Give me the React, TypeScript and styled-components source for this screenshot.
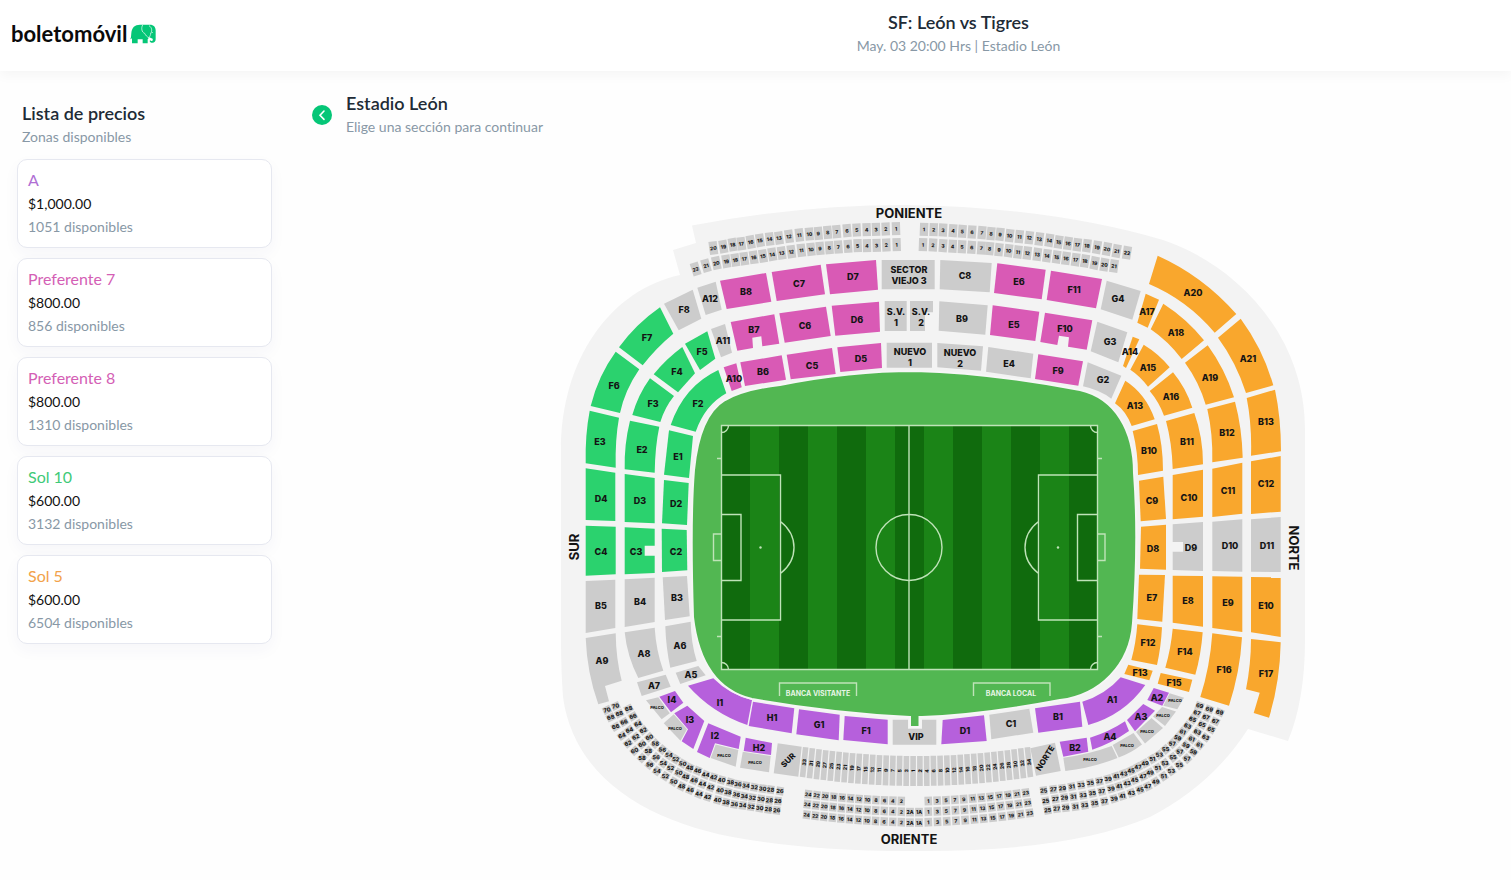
import React from "react";
import styled, { createGlobalStyle } from "styled-components";

const GlobalStyle = createGlobalStyle`
  * { box-sizing: border-box; }
  body {
    margin: 0;
    background: #fefefe;
    color: #212b36;
    font-family: Lato, "Liberation Sans", sans-serif;
    font-variant-ligatures: none;
  }
`;

const Header = styled.header`
  display: grid;
  grid-template-columns: 406px 1fr;
  height: 71px;
  background: #fff;
  box-shadow: 0 4px 12px rgba(0, 0, 0, 0.04);
`;

const Logo = styled.a`
  display: flex;
  align-items: center;
  gap: 3px;
  height: 68px;
  padding-left: 11px;
  color: #0a0a0a;
  font-size: 22px;
  line-height: 28px;
  font-weight: 700;
  text-decoration: none;
`;

const EventInfo = styled.div`
  padding-top: 10px;
  text-align: center;
`;

const Title = styled.h2`
  margin: 0;
  font-size: 18px;
  line-height: 24px;
  font-weight: 600;
  color: #212b36;
`;

const Subtitle = styled.p`
  margin: 0;
  font-size: 14px;
  line-height: 24px;
  color: #8898a6;
`;

const Layout = styled.div`
  display: grid;
  grid-template-columns: 272px 1fr;
  column-gap: 40px;
`;

const Sidebar = styled.aside`
  padding: 30px 0 0 17px;
`;

const SidebarHeading = styled.div`
  padding-left: 5px;
`;

const PriceList = styled.ul`
  display: flex;
  flex-direction: column;
  gap: 10px;
  margin: 10px 0 0;
  padding: 0;
  list-style: none;
`;

const PriceCard = styled.button`
  display: flex;
  flex-direction: column;
  width: 100%;
  padding: 9px 10px 11px;
  border: 1px solid #e6e8f0;
  border-radius: 10px;
  background: #fff;
  box-shadow: 0 6px 16px rgba(60, 60, 120, 0.04);
  font-family: inherit;
  text-align: left;
  cursor: pointer;
`;

const ZoneName = styled.span<{ $color: string }>`
  font-size: 16px;
  line-height: 22px;
  color: ${(p) => p.$color};
`;

const Price = styled.span`
  font-size: 14px;
  line-height: 26px;
  color: #111;
`;

const Available = styled.span`
  font-size: 14px;
  line-height: 19px;
  color: #8898a6;
`;

const Main = styled.main`
  padding-top: 20px;
`;

const VenueBar = styled.div`
  display: flex;
  align-items: center;
  gap: 14px;
`;

const BackButton = styled.button`
  display: flex;
  align-items: center;
  justify-content: center;
  width: 20px;
  height: 20px;
  padding: 0;
  border: 0;
  border-radius: 50%;
  background: #05c677;
  cursor: pointer;
`;

const MapArea = styled.div`
  display: flex;
  justify-content: center;
  margin: 56px 0 0 43px;
`;

const MapSvg = styled.svg`
  display: block;
  width: 100%;
  max-width: 770px;
  height: auto;
  font-family: Inter, "Liberation Sans", sans-serif;
`;

const Section = styled.path<{ $fill: string }>`
  fill: ${(p) => p.$fill};
`;

const SectionLabel = styled.text<{ $size?: number }>`
  font-size: ${(p) => p.$size ?? 9}px;
  font-weight: 800;
  fill: #141414;
  text-anchor: middle;
  dominant-baseline: central;
`;

const SideLabel = styled(SectionLabel)`
  font-size: 13px;
  font-weight: 700;
`;

const BenchLabel = styled(SectionLabel)`
  font-size: 7px;
  font-weight: 700;
  fill: #e6f5e4;
`;

const Line = styled.path`
  fill: none;
  stroke: #bfe3b8;
  stroke-width: 1.4;
`;

const PINK = "#d95ab5";
const GREEN = "#2bd26e";
const ORANGE = "#f9a72d";
const PURPLE = "#b660dc";
const GRAY = "#cccccc";

type Zone = [name: string, x: number, y: number, d: string];

const zones: Record<string, Zone[]> = {
  [PINK]: [
    ["B8", 746, 291, "M720 280.7 766 273 771.3 301.7 726.7 309Z"],
    ["C7", 799, 283, "M771.7 272 820.7 264.7 825 294.3 776.7 301Z"],
    ["D7", 853, 276, "M826 264.3 876 260 878 289.7 830 294.3Z"],
    ["B7", 754, 329, "M730.7 322 774.3 314.3 779.3 343.7 762.3 346.3 761.3 336.3 752.3 337.7 753 348 737.3 350.7Z"],
    ["C6", 805, 325, "M779.3 313.3 826 306.7 830.7 336 784.7 342.7Z"],
    ["D6", 857, 319, "M831.7 305.7 879 301.7 880 331.7 835.3 335.7Z"],
    ["A10", 734, 378, "M723.7 367.3 736.3 363.3 741.7 387.3 731.7 391Z"],
    ["B6", 763, 371, "M740.3 362.3 781.7 355.3 786 379.7 745 386Z"],
    ["C5", 812, 365, "M786.7 354.7 832 348 835.7 374 790.7 379.3Z"],
    ["D5", 861, 358, "M837.3 347.3 881 343 882 368 840.3 372Z"],
    ["E6", 1019, 281, "M997.3 263.3 1045.7 269.7 1041.7 299.3 994 293Z"],
    ["F11", 1074, 289, "M1051 270.7 1102 279 1096 308.3 1046.7 300Z"],
    ["E5", 1014, 324, "M992.7 305.3 1039.3 311.7 1035.3 341 990 335Z"],
    ["F10", 1065, 328, "M1045 312.7 1092.3 320.3 1086.7 349.7 1068 346.7 1069 337.3 1059 335.7 1057.3 345 1040.3 342Z"],
    ["F9", 1058, 370, "M1038.3 354.3 1083 361.3 1078.3 385.7 1035 379Z"],
  ],
  [GREEN]: [
    ["F7", 647, 337, "M660 307.3 673.3 333.7Q656 348 642.7 365.3L619 347.3Q636 324 660 307.3Z"],
    ["F6", 614, 385, "M615.7 351.7 639.3 369.3Q625 390 620 413L590.7 406Q598 376 615.7 351.7Z"],
    ["F5", 702, 351, "M685 343.7 707.3 331.3 715.3 358.7 700 370Z"],
    ["F4", 677, 371, "M682.3 347 695 373.3 678 392.3 653.7 374.3Q666 359 682.3 347Z"],
    ["F3", 653, 403, "M650 378.3 674 396Q665 407 660.3 422L632.3 415Q638 395 650 378.3Z"],
    ["F2", 698, 403, "M718.3 370 726.3 393.3Q705 405 695.7 431.7L670.7 425Q684 386 718.3 370Z"],
    ["E3", 600, 441, "M589.7 410.7 619 417.7Q615 440 615.7 467.7L585.7 463.3Q585 435 589.7 410.7Z"],
    ["E2", 642, 449, "M630 420.7 659.3 426.7Q655 447 654.7 472.7L624.7 469.3Q624 445 630 420.7Z"],
    ["E1", 678, 456, "M669 430.3 693 436 689 478 664 474.7Z"],
    ["D4", 601, 498, "M585.7 468.3 615.3 472.7 615.3 521 585.7 520Z"],
    ["D3", 640, 500, "M624.7 474 654.7 478 654.7 523.3 624.7 522Z"],
    ["D2", 676, 503, "M664 480 688.7 483 687 525 662 523.3Z"],
    ["C4", 601, 551, "M585.7 525.7 615.7 526.7 615.7 574.3 585.7 575.7Z"],
    ["C3", 636, 551, "M624.7 527.3 654.7 528.7V545.7H644.7V555.7H654.7V573L624.7 574.3Z"],
    ["C2", 676, 551, "M661.7 528.7 686.7 530 687.3 570.3 662 572Z"],
  ],
  [ORANGE]: [
    ["A20", 1193, 292, "M1157.7 255.7Q1203 276 1236.3 314L1214.7 332.7Q1187 300 1149 284Z"],
    ["A21", 1248, 358, "M1240.7 318.7Q1263 349 1273.3 385.3L1246 393Q1236 362 1218 337.7Z"],
    ["A17", 1147, 311, "M1145.7 293.7 1159 299.7 1147.7 327.7 1137.3 322.7Z"],
    ["A18", 1176, 332, "M1163.3 303.7Q1187 319 1204 340.3L1181.7 359Q1168 341 1150.7 329.3Z"],
    ["A14", 1130, 351, "M1132.7 336.7 1139.3 339.3 1126 368 1123 366Z"],
    ["A15", 1148, 367, "M1143.7 344.7Q1159 354 1169.7 367.3L1148 386.7Q1140 376 1130.3 369.7Z"],
    ["A19", 1210, 377, "M1207.7 345.3Q1225 369 1234 397.3L1205.7 404.7Q1199 382 1185 362.7Z"],
    ["A16", 1171, 396, "M1173 372.3Q1186 388 1192.3 407.7L1164 415.7Q1159 402 1149.7 391Z"],
    ["A13", 1135, 405, "M1125.3 380.7Q1146 394 1154.7 419.3L1131.7 426Q1126 411 1115 403.3Z"],
    ["B13", 1266, 421, "M1246.7 398 1275 389.7Q1281 418 1281 451.3L1251 455.7Q1252 425 1246.7 398Z"],
    ["B12", 1227, 432, "M1207.3 409 1235 401.7Q1242 428 1242.7 457.7L1212.3 462.3Q1213 434 1207.3 409Z"],
    ["B11", 1187, 441, "M1166 421 1194.3 413Q1203 437 1203 464.3L1172.7 469Q1172 443 1166 421Z"],
    ["B10", 1149, 450, "M1132.7 431 1157 424Q1163 445 1163 470.7L1138 475Q1138 452 1132.7 431Z"],
    ["C9", 1152, 500, "M1139 480.7 1163.3 476.7 1166 519 1140.7 521.3Z"],
    ["C10", 1189, 497, "M1172.7 475 1203 469.7 1203 516.7 1172.7 519.3Z"],
    ["C11", 1228, 490, "M1212.3 468.7 1242.3 462.7 1242.3 513.7 1212.3 517Z"],
    ["C12", 1266, 483, "M1251 461.3 1280.7 456 1280.7 511.7 1251 514Z"],
    ["D8", 1153, 548, "M1141 526.7 1166 524.7 1166 569.7 1140 568.7Z"],
    ["E7", 1152, 597, "M1139 574.7 1165 575 1162.3 621.7 1137.3 619Z"],
    ["E8", 1188, 600, "M1172.7 575.7 1203 576 1203 626.7 1172.7 622.7Z"],
    ["E9", 1228, 602, "M1212.3 576.3 1242.3 576.7 1242.3 632 1212.3 628Z"],
    ["E10", 1266, 605, "M1251 577 1280.7 577.3 1280.7 637 1251 632.3Z"],
    ["F12", 1148, 642, "M1137.3 624.3 1162 627.3Q1161 647 1157 665L1131.3 660Q1136 643 1137.3 624.3Z"],
    ["F14", 1185, 651, "M1172.7 628.7 1202.7 632.3Q1201 655 1195.3 674.7L1165.3 667.7Q1171 648 1172.7 628.7Z"],
    ["F16", 1224, 669, "M1212.3 633.3 1242 637.3Q1240 672 1229 705.7L1200.3 697Q1210 667 1212.3 633.3Z"],
    ["F17", 1266, 673, "M1251 639 1280.7 642.3Q1280 682 1269 717.7L1253.7 713 1259.7 692.7 1246 689.3Q1251 664 1251 639Z"],
    ["F13", 1140, 672, "M1128.3 664.7 1152.7 670.7 1149.3 680.3 1124.3 674Z"],
    ["F15", 1174, 682, "M1160.7 673 1192.3 679.7 1189 692 1157.7 683.7Z"],
  ],
  [PURPLE]: [
    ["A1", 1112, 699, "M1120.7 677.3 1145.3 685Q1124 715 1088.3 725L1082.3 701.7Q1105 695 1120.7 677.3Z"],
    ["A2", 1157, 697, "M1153.7 688 1169 692.7 1162.3 705.7 1147.3 700Z"],
    ["A3", 1141, 716, "M1143.3 704 1155 710.7 1135 731.3 1127 720Z"],
    ["A4", 1110, 736, "M1125 721.3 1129 731Q1112 743 1092.3 749.7L1090 737.7Q1109 732 1125 721.3Z"],
    ["B2", 1075, 747, "M1059.7 741.7 1086.7 737.7 1088.3 751.7 1063.3 756.7Z"],
    ["B1", 1058, 716, "M1035 708.3 1080 701.7 1082.3 726.7 1038.3 732.7Z"],
    ["D1", 965, 730, "M942.7 720 984 715.3 986.7 741 941.3 744.3Z"],
    ["F1", 866, 730, "M844.7 716 887.7 719.7 887.7 744.3 843.3 740Z"],
    ["G1", 819, 724, "M799 709.3 839.7 714.7 838.7 740.3 796.3 734.3Z"],
    ["H1", 772, 717, "M753 701.7 794.3 708.3 791.7 733.3 748.7 726Z"],
    ["I1", 720, 702, "M688 685.7 713.3 678.3Q730 695 752 700L747.3 725Q712 713 688 685.7Z"],
    ["I4", 672, 699, "M659.3 696.7 675 691 683.3 702.7 671 712.3Z"],
    ["I3", 690, 719, "M674.3 713.3 687.3 705.7 704.3 721 693.3 749 681.7 741.3 688 729.3Z"],
    ["I2", 715, 735, "M708.3 723.3 740.7 736.7 738.7 749 715 743.3 709.7 758 697 752Z"],
    ["H2", 759, 747, "M745.7 737.7 772 743 771 755 743.7 751Z"],
  ],
  [GRAY]: [
    ["A12", 710, 298, "M697.3 287.7 715.7 281.7 721.7 309.7 705.7 315Z"],
    ["F8", 684, 309, "M664 303.7 692.7 289.7 701.3 318.7 678.7 330.3Z"],
    ["A11", 723, 340, "M711 329 725 324 732 352.7 721 357.3Z"],
    ["C8", 965, 275, "M940.3 260 991.7 263 989.7 292.3 939.7 289.3Z"],
    ["G4", 1118, 298, "M1106.7 280.7 1140.7 291 1132.3 319.7 1100.7 309.3Z"],
    ["B9", 962, 318, "M939.3 301.3 987.7 305.3 985.3 334.7 938.7 330.7Z"],
    ["G3", 1110, 341, "M1097.3 321.7 1127.3 332.3 1118.3 362.3 1090.7 351.3Z"],
    ["E4", 1009, 363, "M988.3 347 1033.3 353.7 1030.7 378.3 986 371.7Z"],
    ["G2", 1103, 379, "M1087.7 362.3 1121.3 375.7 1111.3 398.7Q1100 390 1083 386.3Z"],
    ["D9", 1191, 547, "M1172.7 524.3 1203 522V571L1172.7 570V551.7H1183V542H1172.7Z"],
    ["D10", 1230, 545, "M1212.3 521.7 1242.3 519.3 1242.3 571.7 1212.3 571Z"],
    ["D11", 1267, 545, "M1251 519.3 1280.7 517 1280.7 572 1251 571.7Z"],
    ["B5", 601, 605, "M585.7 581 615.3 579.7 615.3 628 585.7 633Z"],
    ["B4", 640, 601, "M624.7 579.3 654.7 577.7 654.7 622 624.7 627Z"],
    ["B3", 677, 597, "M662.7 577.3 687 576 689.7 616.3 665 620Z"],
    ["A9", 602, 660, "M585.7 638 615.7 633.3Q616 659 621.7 680.7L605 686 609 701.3 598.3 704.3Q587 673 585.7 638Z"],
    ["A8", 644, 653, "M624.7 632.3 654.7 627.7Q656 650 663.3 670.7L638.3 678Q627 656 624.7 632.3Z"],
    ["A6", 680, 645, "M665.3 626.3 690.7 621.7Q691 643 696.7 661L670.3 667.7Q666 648 665.3 626.3Z"],
    ["A7", 654, 685, "M637 682.3 665.7 674.7 670.7 686.7 641.7 696Z"],
    ["A5", 691, 674, "M675.7 672.7 698.3 666 705.7 675.3 680.3 684Z"],
    ["C1", 1011, 723, "M989.3 714.7 1029.3 708.7 1033.3 732.7 991.3 739.3Z"],
    ["VIP", 916, 736, "M892.7 719.7H908V728.7H922V719.7H936.3V744.7H892.7Z"],
  ],
};

const boxes: Zone[] = [
  ["PALCO", 657, 707, "M646 700.3 658.3 697.2 669.8 713.2 661.7 719.3Z"],
  ["PALCO", 675, 728, "M673.8 714.3 687 729.3 680.5 740.7 663.7 723.3Z"],
  ["PALCO", 724, 755, "M715.7 744.4 738.3 750 735.7 766.7 710.7 758Z"],
  ["PALCO", 755, 762, "M742.8 751.7 770.7 756 769 772.3 740 767.7Z"],
  ["PALCO", 1175, 700, "M1169.7 693.3 1184 697.7 1177.3 709.3 1163.3 705.7Z"],
  ["PALCO", 1163, 715, "M1162 707 1176 711.5 1165 726 1153 716.5Z"],
  ["PALCO", 1147, 731, "M1151.5 718 1163 728 1145 743.5 1136 732Z"],
  ["PALCO", 1127, 745, "M1112.7 745 1133.5 733 1142 744.5Q1131 753 1118.7 757.5Z"],
  ["PALCO", 1090, 759, "M1063.3 757.8Q1090 754 1111.7 746L1117.5 758Q1092 768 1065.3 771Z"],
];

const twoLine: [string, string, number, number, string][] = [
  ["SECTOR", "VIEJO 3", 909, 274, "M881.7 260H934.7V289.3H881.7Z"],
  ["S.V.", "1", 896, 316, "M884.7 301H906.7V331H884.7Z"],
  ["S.V.", "2", 921, 316, "M910 301H933V312.3H925V331H910Z"],
  ["NUEVO", "1", 910, 356, "M886.7 342.7H932V367.7H886.7Z"],
  ["NUEVO", "2", 960, 357, "M937.3 343 983 346.3 981 370.7 937.3 367.3Z"],
];

// Seat rows list cell centres as x,y pairs on a grid three times finer than the map.
type SeatRow = {
  x: number;
  y: number;
  w: number;
  h: number;
  first: number;
  step: number;
  size: number;
  upright?: boolean;
  pts: number[];
};

const top = { w: 25, h: 39, size: 15 };
const corner = { w: 22, h: 25, size: 17, upright: true };

const seatRows: SeatRow[] = [
  { ...top, x: 680, y: 195, first: 20, step: -1, pts: [100,159,130,155,158,149,184,146,212,141,240,136,269,132,297,129,327,124,358,120,388,117,415,115,443,112,470,110,501,107,530,105,560,104,588,103,617,102,648,101] },
  { ...top, x: 680, y: 195, first: 22, step: -1, pts: [47,222,78,212,109,204,139,199,166,195,193,191,221,187,249,183,277,178,305,174,334,170,364,166,393,163,420,160,448,158,475,156,504,154,533,152,561,152,590,151,619,150,650,149] },
  { ...top, x: 900, y: 195, first: 1, step: 1, pts: [72,103,101,104,129,105,159,107,187,109,216,111,246,113,273,116,300,118,329,122,358,125,388,128,418,132,448,136,476,141,504,145,532,149,561,152,591,157,621,162,650,168,681,173] },
  { ...top, x: 900, y: 195, first: 1, step: 1, pts: [69,149,99,150,129,152,158,154,186,155,215,157,244,159,269,161,297,164,326,167,354,171,382,174,412,178,441,182,470,186,498,190,527,194,555,198,584,204,613,209,642,213] },
  { ...corner, x: 560, y: 640, first: 70, step: -2, pts: [141,210,152,232,167,260,186,287,204,310,224,332,246,354,269,374,291,393,316,409,341,425,365,439,390,450,417,462,443,471,473,480,498,487,523,493,548,496,573,500,599,504,625,508,650,511] },
  { ...corner, x: 560, y: 640, first: 70, step: -2, pts: [167,198,178,221,192,246,208,270,227,291,246,313,265,333,288,352,310,370,332,384,356,398,377,410,402,421,427,432,452,442,480,451,504,457,529,464,553,469,577,473,603,477,628,481,654,483] },
  { ...corner, x: 560, y: 640, first: 68, step: -2, pts: [206,206,219,229,234,252,250,271,268,292,286,311,307,329,327,345,347,358,368,371,389,383,413,392,437,404,461,412,485,420,511,427,534,433,558,437,583,442,608,446,632,449,660,453] },
  { ...corner, x: 1000, y: 650, first: 25, step: 2, pts: [131,422,160,418,187,415,215,410,243,405,271,399,298,394,324,387,348,379,371,371,393,362,414,351,435,340,457,327,478,314,497,298,517,281,533,264,548,246,563,228,578,208,591,189,599,167] },
  { ...corner, x: 1000, y: 650, first: 25, step: 2, pts: [137,453,166,447,193,443,220,440,249,436,277,430,305,424,333,416,357,409,381,400,404,390,429,379,450,368,473,354,495,340,519,322,539,305,558,286,575,267,592,246,606,224,618,202,628,178] },
  { ...corner, x: 1000, y: 650, first: 25, step: 2, pts: [143,481,170,476,197,473,226,470,254,466,284,460,313,454,342,446,367,438,394,429,420,419,443,409,467,395,491,379,514,363,538,345,561,326,580,306,598,285,617,262,633,238,646,214,659,187] },
];

type CellProps = {
  x: number;
  y: number;
  w: number;
  h: number;
  angle: number;
  size: number;
  label: string;
  turn?: number;
};

function Cell({ x, y, w, h, angle, size, label, turn }: CellProps) {
  return (
    <g transform={`translate(${x} ${y}) rotate(${angle})`}>
      <rect x={-w / 2} y={-h / 2} width={w} height={h} fill={GRAY} />
      <SectionLabel $size={size} transform={turn ? `rotate(${turn})` : undefined}>
        {label}
      </SectionLabel>
    </g>
  );
}

function Seats({ x, y, w, h, first, step, size, upright, pts }: SeatRow) {
  const count = pts.length / 2;
  return (
    <g transform={`translate(${x} ${y}) scale(${1 / 3})`}>
      {Array.from({ length: count }, (_, i) => {
        const a = Math.max(i - 1, 0) * 2;
        const b = Math.min(i + 1, count - 1) * 2;
        const angle = (Math.atan2(pts[b + 1] - pts[a + 1], pts[b] - pts[a]) * 180) / Math.PI;
        // Steep cells carry their number level with the page, leaning slightly into the bend.
        const lean = Math.abs(angle) > 45 ? angle - Math.sign(angle) * 90 : angle * (1 - Math.abs(angle) / 45);
        return (
          <Cell
            key={i}
            x={pts[i * 2]}
            y={pts[i * 2 + 1]}
            w={w}
            h={h}
            angle={angle}
            turn={upright ? lean / 2 - angle : 0}
            size={size}
            label={String(first + step * i)}
          />
        );
      })}
    </g>
  );
}

function FanRow() {
  return (
    <g>
      {Array.from({ length: 34 }, (_, i) => {
        const t = (i - 16.5) / 16.5;
        const label = i < 17 ? 33 - i * 2 : (i - 16) * 2;
        return <Cell key={i} x={916.5 + t * 112.4} y={771 - 8.8 * t * t} w={5.6} h={30} angle={-6 * t} size={5} turn={-90} label={String(label)} />;
      })}
    </g>
  );
}

const eastRows = [
  { lx: 808.3, rx: 1025.7, y: 801, ly: 6.7, ry: 8.3 },
  { lx: 807.3, rx: 1027.7, y: 811.7, ly: 7.4, ry: 9 },
  { lx: 806.7, rx: 1029.7, y: 822.2, ly: 7.5, ry: 9.2 },
];

function EastRows() {
  return (
    <g>
      {eastRows.map((r, n) => (
        <g key={n}>
          {Array.from({ length: 12 }, (_, i) => {
            const t = i / 11;
            const bend = 0.4 * t + 0.6 * t * t;
            return (
              <React.Fragment key={i}>
                <Cell x={901.3 + (r.lx - 901.3) * t} y={r.y - r.ly * bend} w={7.4} h={8.6} angle={2 + 5 * t} size={5} label={String(2 + i * 2)} />
                <Cell x={928.3 + (r.rx - 928.3) * t} y={r.y - r.ry * bend} w={7.6} h={8.6} angle={-2 - 6 * t} size={5} label={String(1 + i * 2)} />
              </React.Fragment>
            );
          })}
          {n > 0 && <Cell x={910} y={r.y + 0.4} w={7.8} h={8.6} angle={0} size={5} label="2A" />}
          {n > 0 && <Cell x={919} y={r.y + 0.4} w={7.8} h={8.6} angle={0} size={5} label="1A" />}
        </g>
      ))}
    </g>
  );
}

function Pitch() {
  return (
    <g>
      <path
        d="M725 400Q745 389 780 385Q850 371 915 371Q990 373 1080 390C1115 398 1134 430 1134 473Q1139 540 1133 623C1130 665 1100 695 1060 700Q980 715 922 717H919.5V727H910V717Q830 713 752 699C715 690 698 660 693 617Q690 520 694 470C697 440 705 412 725 400Z"
        fill="#52b752"
        stroke="#f6f6f6"
        strokeWidth="2"
      />
      <rect x="721" y="425" width="377" height="244.500" fill="#106b0d" />
      {[0, 1, 2, 3, 4, 5].map((i) => (
        <rect key={i} x={750 + i * 58} y="425" width="29" height="244.500" fill="#1b8417" />
      ))}
      <Line d="M721.500 425.500H1097.500V669.500H721.500ZM909 425.500V669.500" />
      <Line d="M721.500 475H780.500V620H721.500M721.500 514.500H741V580.500H721.500M721.500 534H713.500V560.500H721.500M780.500 521.500Q794 532 794 547.500T780.500 573.500" />
      <Line d="M1097.500 475H1038.500V620H1097.500M1097.500 514.500H1077.500V580.500H1097.500M1097.500 534H1105V560.500H1097.500M1038.500 521.500Q1025 532 1025 547.500T1038.500 573.500" />
      <Line d="M717 458.500H721M717 636.500H721M1098 458.500H1102M1098 636.500H1102" />
      <Line d="M728.500 425.500A7 7 0 0 1 721.500 432.500M1090.500 425.500A7 7 0 0 0 1097.500 432.500M721.500 662.500A7 7 0 0 1 728.500 669.500M1097.500 662.500A7 7 0 0 0 1090.500 669.500" />
      <circle cx="909" cy="547.500" r="33" fill="none" stroke="#bfe3b8" strokeWidth="1.4" />
      <circle cx="760.500" cy="547.500" r="1.200" fill="#bfe3b8" />
      <circle cx="1058" cy="547.500" r="1.200" fill="#bfe3b8" />
      <Line d="M779.500 696V683H856.500V696M973.500 696V683H1050V696" />
      <BenchLabel x="818" y="693">BANCA VISITANTE</BenchLabel>
      <BenchLabel x="1011" y="693">BANCA LOCAL</BenchLabel>
    </g>
  );
}

function StadiumMap() {
  return (
    <MapSvg viewBox="548 195 770 670" role="img" aria-label="Mapa del Estadio León">
      <path
        d="M692 225.500Q800 205 905 205Q1050 207 1163 240C1230 262 1305 330 1305 430V640Q1305 700 1288 741L1248 729Q1212 785 1150 817Q1070 851 925 851Q830 852 757 841C660 828 575 785 563 697Q561 670 561 640V450C561 360 610 290 680 275L673 250 696 243Z"
        fill="#f3f3f3"
      />
      {Object.entries(zones).map(([color, list]) =>
        list.map(([name, , , d]) => <Section key={name} $fill={color} d={d} />)
      )}
      {boxes.map(([name, x, y, d]) => (
        <g key={d}>
          <Section $fill={GRAY} d={d} />
          <SectionLabel $size={4} x={x} y={y}>{name}</SectionLabel>
        </g>
      ))}
      {twoLine.map(([a, b, x, y, d]) => (
        <g key={d}>
          <Section $fill={GRAY} d={d} />
          <SectionLabel x={x} y={y - 5}>{a}</SectionLabel>
          <SectionLabel x={x} y={y + 6}>{b}</SectionLabel>
        </g>
      ))}
      <Section $fill={GRAY} d="M777.700 743.300 801.700 746.700 798.300 776.700 773.700 773.300Z" />
      <SectionLabel $size={8} transform="translate(788 760) rotate(-45)">SUR</SectionLabel>
      <Section $fill={GRAY} d="M1030.300 748.300 1055 742.700 1060.700 771 1036 775.700Z" />
      <SectionLabel $size={8} transform="translate(1045 758) rotate(-58)">NORTE</SectionLabel>
      <FanRow />
      <EastRows />
      {seatRows.map((row, i) => <Seats key={i} {...row} />)}
      <Pitch />
      {Object.values(zones).map((list) =>
        list.map(([name, x, y]) => <SectionLabel key={name} x={x} y={y}>{name}</SectionLabel>)
      )}
      <SideLabel x="909" y="213">PONIENTE</SideLabel>
      <SideLabel x="909" y="839">ORIENTE</SideLabel>
      <SideLabel transform="translate(574 547) rotate(-90)">SUR</SideLabel>
      <SideLabel transform="translate(1294 548) rotate(90)">NORTE</SideLabel>
    </MapSvg>
  );
}

function Elephant() {
  return (
    <svg width="26" height="20" viewBox="0 0 78 60" aria-hidden="true">
      <path
        d="M6 58V42L3 46 1 45C4 40 3 34 4 27C6 10 14 2 30 2H60C71 2 77 9 77 19V46C77 54 71 58 64 56C60 55 58 52 60 49L64 51C68 51 69 48 68 44L58 40 53 46V58H38V46H23V58Z"
        fill="#05c677"
      />
      <path d="M38 3C33 12 35 25 44 28C47 34 51 39 57 41C60 36 62 33 62 28M57 5C66 10 67 20 62 29M67 24V27" fill="none" stroke="#fff" strokeWidth="2" />
    </svg>
  );
}

const prices = [
  { name: "A", price: "$1,000.00", left: 1051, color: "#b06fd4" },
  { name: "Preferente 7", price: "$800.00", left: 856, color: "#d45fb5" },
  { name: "Preferente 8", price: "$800.00", left: 1310, color: "#d45fb5" },
  { name: "Sol 10", price: "$600.00", left: 3132, color: "#3fca78" },
  { name: "Sol 5", price: "$600.00", left: 6504, color: "#f2a24a" },
];

export default function App() {
  return (
    <>
      <GlobalStyle />
      <Header>
        <Logo href="#">
          boletomóvil
          <Elephant />
        </Logo>
        <EventInfo>
          <Title as="h1">SF: León vs Tigres</Title>
          <Subtitle>May. 03 20:00 Hrs | Estadio León</Subtitle>
        </EventInfo>
      </Header>
      <Layout>
        <Sidebar>
          <SidebarHeading>
            <Title>Lista de precios</Title>
            <Subtitle>Zonas disponibles</Subtitle>
          </SidebarHeading>
          <PriceList>
            {prices.map((p) => (
              <li key={p.name}>
                <PriceCard type="button">
                  <ZoneName $color={p.color}>{p.name}</ZoneName>
                  <Price>{p.price}</Price>
                  <Available>{p.left} disponibles</Available>
                </PriceCard>
              </li>
            ))}
          </PriceList>
        </Sidebar>
        <Main>
          <VenueBar>
            <BackButton type="button" aria-label="Regresar">
              <svg width="20" height="20" viewBox="0 0 20 20" aria-hidden="true">
                <path d="M12 6 8 10.200 12 14.400" fill="none" stroke="#fff" strokeWidth="1.600" strokeLinecap="round" />
              </svg>
            </BackButton>
            <div>
              <Title>Estadio León</Title>
              <Subtitle>Elige una sección para continuar</Subtitle>
            </div>
          </VenueBar>
          <MapArea>
            <StadiumMap />
          </MapArea>
        </Main>
      </Layout>
    </>
  );
}
